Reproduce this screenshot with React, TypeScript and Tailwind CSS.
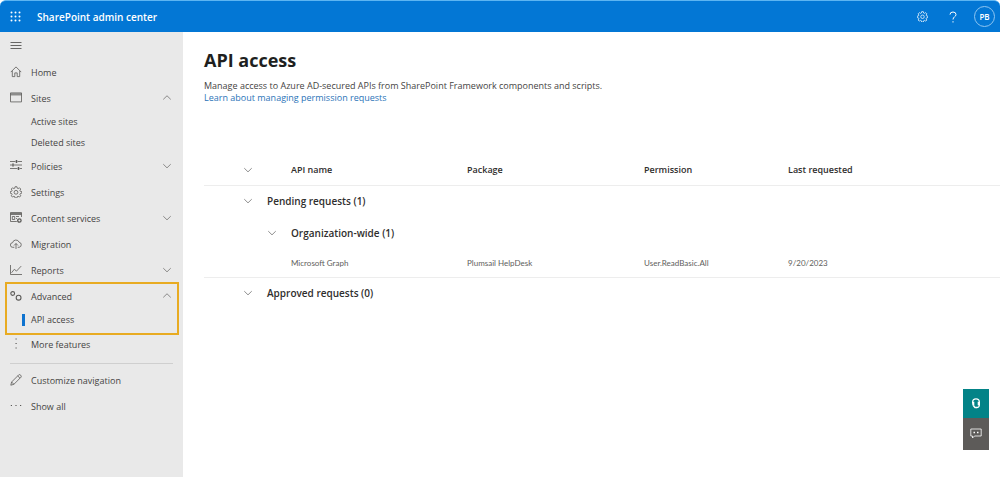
import { Fragment, useState } from "react";
import type { ReactNode } from "react";
import clsx from "clsx";

interface IconProps {
  children: ReactNode;
  className?: string;
}

/** Thin outline icon on a 12px grid */
function Icon({ children, className = "size-3" }: IconProps) {
  return (
    <svg
      viewBox="0 0 12 12"
      fill="none"
      stroke="currentColor"
      strokeWidth="0.8"
      aria-hidden="true"
      className={clsx("shrink-0", className)}
    >
      {children}
    </svg>
  );
}

function Chevron({ open = false }: { open?: boolean }) {
  return (
    <Icon className="size-[10px]">
      {open ? <path d="M1.5 7.7 6 3.3l4.5 4.4" /> : <path d="M1.5 3.8 6 8.2l4.5-4.4" />}
    </Icon>
  );
}

const GEAR_PATH =
  "M5.1.7h1.8l.35 1.5.9.4 1.35-.8 1.25 1.25-.8 1.35.4.9 1.5.35v1.5l-1.5.4-.4.9.8 1.35-1.25 1.25-1.35-.8-.9.4-.35 1.45H5.1l-.35-1.45-.9-.4-1.35.8L1.25 9.8l.8-1.35-.4-.9L.2 7.15v-1.5l1.45-.35.4-.9-.8-1.35L2.5 1.8l1.35.8.9-.4z";

function GearIcon({ className }: { className?: string }) {
  return (
    <Icon className={className}>
      <path d={GEAR_PATH} strokeLinejoin="round" />
      <circle cx="6" cy="6.3" r="1.9" />
    </Icon>
  );
}

const ICONS: Record<string, ReactNode> = {
  home: (
    <Icon>
      <path d="M.8 6.1 6 .9l5.2 5.2M2.3 4.8v5.8h2.5V6.9h2.4v3.7h2.5V4.8" />
    </Icon>
  ),
  sites: (
    <Icon>
      <path d="M.5.9h11v9H.5zM.5 2.9h11M.5 1.9h11" />
    </Icon>
  ),
  policies: (
    <Icon>
      <path d="M0 1.5h5.5M7.5 1.5H12M0 5h2M4 5h8M0 8.5h7.5M9.5 8.5H12" />
      <path d="M6.5 0v3M3 3.5v3M8.5 7v3" strokeWidth="1.5" />
    </Icon>
  ),
  settings: <GearIcon />,
  content: (
    <Icon>
      <path d="M6.8 9.5H.5v-9h11V5M.5 2.5h11M.5 1.5h11M2.3 4.5h2.4v3H2.3zM6 4.5h3M6 6.5h1" />
      <circle cx="9.4" cy="8.5" r="1.7" strokeWidth="1.3" />
    </Icon>
  ),
  migration: (
    <Icon>
      <path d="M4.3 9.3H2.8a2.3 2.3 0 0 1-.2-4.6 3.4 3.4 0 0 1 6.5-.5 2.6 2.6 0 0 1 .1 5.1H7.7" />
      <path d="M6 11V5.6M4 7.5l2-2 2 2" />
    </Icon>
  ),
  reports: (
    <Icon>
      <path d="M.5 1v9.5H12M1.5 8.8l2.8-3.5 2.2 1.8 4.7-5" />
    </Icon>
  ),
  advanced: (
    <Icon>
      <circle cx="2.7" cy="3.5" r="1.9" strokeWidth="1.1" />
      <circle cx="8.6" cy="7.7" r="2.4" strokeWidth="1.1" />
    </Icon>
  ),
  more: (
    <Icon>
      <path d="M5.5 1h1.2M5.5 5.5h1.2M5.5 10h1.2" strokeWidth="1.2" />
    </Icon>
  ),
  customize: (
    <Icon>
      <path d="m.8 11.2.8-3.2L8.8.8q1-.6 1.9.4t.4 1.9L3.9 10.3zM1.6 8l2.3 2.3M7.7 1.9l2.3 2.3" />
    </Icon>
  ),
  showAll: (
    <Icon>
      <path d="M.8 5.5H2M5.4 5.5h1.2M10 5.5h1.2" strokeWidth="1.2" />
    </Icon>
  ),
};

interface NavItem {
  label: string;
  icon: string;
  expandable?: boolean;
  children?: string[];
}

const NAV: NavItem[] = [
  { label: "Home", icon: "home" },
  { label: "Sites", icon: "sites", expandable: true, children: ["Active sites", "Deleted sites"] },
  { label: "Policies", icon: "policies", expandable: true },
  { label: "Settings", icon: "settings" },
  { label: "Content services", icon: "content", expandable: true },
  { label: "Migration", icon: "migration" },
  { label: "Reports", icon: "reports", expandable: true },
  { label: "Advanced", icon: "advanced", expandable: true, children: ["API access"] },
  { label: "More features", icon: "more" },
];

function NavRow({ item, open, onToggle }: { item: NavItem; open?: boolean; onToggle?: () => void }) {
  return (
    <button
      type="button"
      aria-expanded={item.expandable ? !!open : undefined}
      onClick={onToggle}
      className="flex h-[26px] w-full items-center pr-[11px] pl-[10px] text-left text-[#5a5957]"
    >
      {ICONS[item.icon]}
      <span className="ml-[9px] flex-1 pt-px text-[#454443]">{item.label}</span>
      {item.expandable && <Chevron open={open} />}
    </button>
  );
}

function Sidebar() {
  const [open, setOpen] = useState<Record<string, boolean>>({ Sites: true, Advanced: true });

  return (
    <nav className="w-[183px] shrink-0 bg-[#e9e9e9] text-[#454443]">
      <button type="button" aria-label="Collapse navigation" className="flex h-[27px] items-center px-[10px]">
        <Icon>
          <path d="M.5 2.5h11M.5 5.5h11M.5 8.5h11" />
        </Icon>
      </button>

      {NAV.map((item) => {
        const isOpen = !!open[item.label];
        return (
          <div
            key={item.label}
            className={clsx(
              item.label === "Advanced" &&
                "relative pb-px after:pointer-events-none after:absolute after:-top-px after:right-1 after:-bottom-1 after:left-[5px] after:border-2 after:border-[#e8ab22] after:content-['']"
            )}
          >
            <NavRow
              item={item}
              open={isOpen}
              onToggle={() => setOpen({ ...open, [item.label]: !isOpen })}
            />
            {isOpen &&
              item.children?.map((child) => {
                const active = child === "API access";
                return (
                  <a
                    key={child}
                    href="#"
                    aria-current={active ? "page" : undefined}
                    className="flex h-[21px] items-center pl-[22px]"
                  >
                    <span className={clsx("mr-[6px] h-3 w-[3px]", active && "bg-[#0f73cf]")} />
                    {child}
                  </a>
                );
              })}
          </div>
        );
      })}

      <hr className="mx-[10px] mt-[6px] mb-[3px] border-[#cfcfcf]" />
      <NavRow item={{ label: "Customize navigation", icon: "customize" }} />
      <NavRow item={{ label: "Show all", icon: "showAll" }} />
    </nav>
  );
}

function Header() {
  return (
    <header className="flex h-8 items-center rounded-t-md border-t border-[#5db5f2] bg-[#0377d5] pr-[5px] pl-[10px] text-white">
      <button type="button" aria-label="App launcher">
        <svg viewBox="0 0 12 12" fill="currentColor" aria-hidden="true" className="size-3">
          {[0, 4, 8].map((y) => (
            <Fragment key={y}>
              {[0, 4, 8].map((x) => (
                <circle key={x} cx={x + 1.5} cy={y + 1.5} r="1" />
              ))}
            </Fragment>
          ))}
        </svg>
      </button>
      <span className="ml-[15px] flex-1 text-[10px] font-semibold">SharePoint admin center</span>
      <button type="button" aria-label="Settings">
        <GearIcon className="size-[11px]" />
      </button>
      <button type="button" aria-label="Help" className="mr-[15px] ml-[19px]">
        <Icon>
          <path d="M3 3.6Q3 1 6 1t3 2.6C9 5.8 6 5.7 6 8.5M6 10.2v1.3" strokeWidth="1" />
        </Icon>
      </button>
      <button
        type="button"
        aria-label="Account manager for PB"
        className="flex size-[21px] items-center justify-center rounded-full border border-[#8fc6f2] text-[8px] font-semibold"
      >
        PB
      </button>
    </header>
  );
}

function ToggleButton({ label }: { label: string }) {
  return (
    <button type="button" aria-label={label} className="block text-[#555]">
      <Chevron />
    </button>
  );
}

function RequestsTable() {
  return (
    <table className="mt-[51px] w-full table-fixed border-collapse text-left text-[#2f2e2d]">
      <colgroup>
        <col className="w-[63px]" />
        <col className="w-6" />
        <col className="w-[176px]" />
        <col className="w-[177px]" />
        <col className="w-36" />
        <col />
      </colgroup>
      <thead>
        <tr className="h-[30px] border-b border-[#ededed]">
          <td className="pl-[39px]">
            <ToggleButton label="Collapse all groups" />
          </td>
          <td />
          <th className="font-semibold">API name</th>
          <th className="font-semibold">Package</th>
          <th className="font-semibold">Permission</th>
          <th className="font-semibold">Last requested</th>
        </tr>
      </thead>
      <tbody>
        <tr className="h-8">
          <td className="pl-[39px]">
            <ToggleButton label="Collapse pending requests" />
          </td>
          <th colSpan={5} className="text-[10px] font-semibold">
            Pending requests (1)
          </th>
        </tr>
        <tr className="h-8">
          <td />
          <td>
            <ToggleButton label="Collapse organization-wide" />
          </td>
          <th colSpan={4} className="text-[10px] font-semibold">
            Organization-wide (1)
          </th>
        </tr>
        <tr className="h-7 border-b border-[#ededed] font-['Lato',sans-serif] text-[8px] text-[#605e5c]">
          <td />
          <td />
          <td>Microsoft Graph</td>
          <td>Plumsail HelpDesk</td>
          <td>User.ReadBasic.All</td>
          <td>9/20/2023</td>
        </tr>
        <tr className="h-8">
          <td className="pl-[39px]">
            <ToggleButton label="Collapse approved requests" />
          </td>
          <th colSpan={5} className="text-[10px] font-semibold">
            Approved requests (0)
          </th>
        </tr>
      </tbody>
    </table>
  );
}

function FloatingActions() {
  return (
    <div className="fixed right-[11px] bottom-[27px] flex w-[26px] flex-col text-white">
      <button type="button" aria-label="Support" className="flex h-[29px] items-center justify-center bg-[#038387]">
        <Icon>
          <path d="M2.6 5.5V4.2a3.4 3.4 0 0 1 6.8 0v2.5Q9.400 9.500 6.500 9.700" strokeWidth="1.2" />
          <path d="M3.3 3.800v3.800M8.700 3.800v3.400" strokeWidth="2" />
          <path d="M3.300 7.500 5 9.500h2" strokeWidth="1.400" />
        </Icon>
      </button>
      <button type="button" aria-label="Feedback" className="flex h-8 items-center justify-center bg-[#5d5b59]">
        <Icon>
          <path d="M.8 1h10.4v7H4.5L2.5 10V8H.8z" />
          <path d="M3.5 4.5H5M7 4.5h1.5" strokeWidth="1.5" />
        </Icon>
      </button>
    </div>
  );
}

export default function App() {
  return (
    <div className="flex min-h-screen flex-col bg-white font-['Open_Sans',sans-serif] text-[9px] leading-3">
      <Header />
      <div className="flex flex-1">
        <Sidebar />
        <main className="min-w-0 flex-1 pt-4 pl-[21px]">
          <h1 className="text-lg leading-6 font-bold text-[#201f1e]">API access</h1>
          <p className="mt-2 text-[#454443]">
            Manage access to Azure AD-secured APIs from SharePoint Framework components and scripts.
          </p>
          <a href="#" className="block w-fit text-[#2b74b8]">
            Learn about managing permission requests
          </a>
          <RequestsTable />
        </main>
      </div>
      <FloatingActions />
    </div>
  );
}
